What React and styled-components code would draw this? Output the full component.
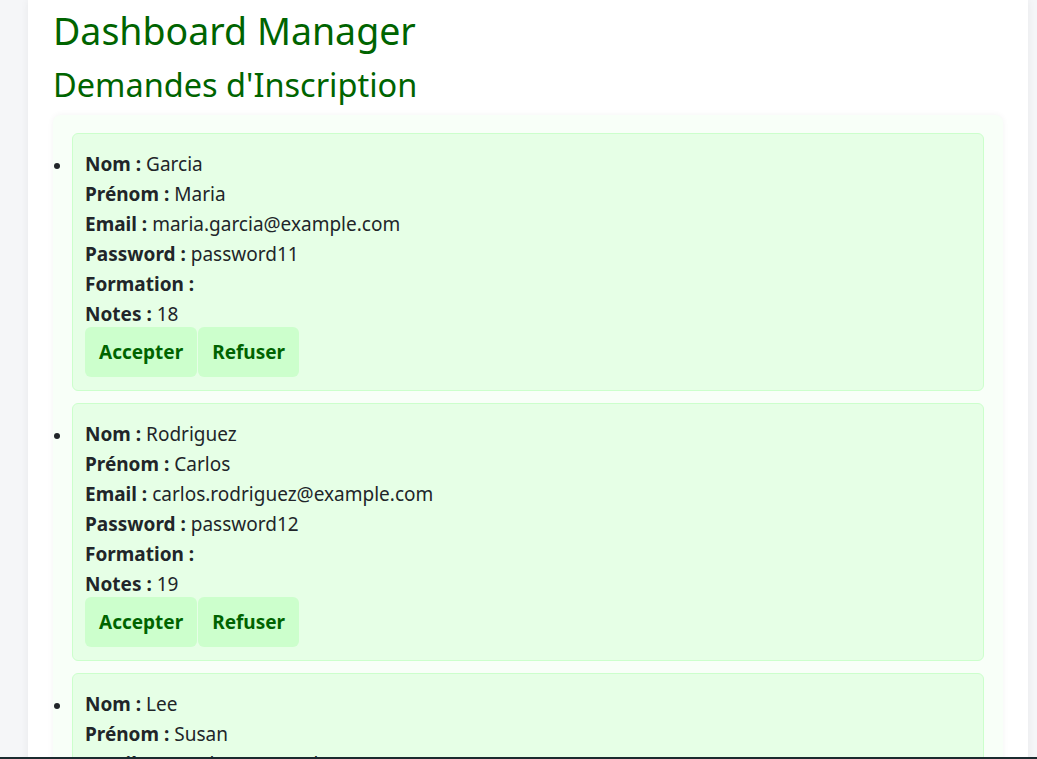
import React from 'react'
import { styled, createGlobalStyle } from 'styled-components';

const requests = [
  { nom: 'Garcia', prenom: 'Maria', email: 'maria.garcia@example.com', password: 'password11', formation: '', notes: 18 },
  { nom: 'Rodriguez', prenom: 'Carlos', email: 'carlos.rodriguez@example.com', password: 'password12', formation: '', notes: 19 },
  { nom: 'Lee', prenom: 'Susan', email: 'susan.lee@example.com', password: 'password13', formation: '', notes: 17 },
];

const GlobalStyle = createGlobalStyle`
  html, body {
    margin: 0;
    padding: 0;
    background: #f5f6f8;
    font-family: "Noto Sans", "Open Sans", sans-serif;
    color: #212529;
  }
`;

const App = () => {
  return (
    <>
      <GlobalStyle />
      <Page>
        <Title>Dashboard Manager</Title>
        <SubTitle>Demandes d'Inscription</SubTitle>
        <RequestList>
          {requests.map((r) => (
            <RequestItem key={r.email}>
              <Field><b>Nom :</b> {r.nom}</Field>
              <Field><b>Prénom :</b> {r.prenom}</Field>
              <Field><b>Email :</b> {r.email}</Field>
              <Field><b>Password :</b> {r.password}</Field>
              <Field><b>Formation :</b> {r.formation}</Field>
              <Field><b>Notes :</b> {r.notes}</Field>
              <Actions>
                <ActionButton>Accepter</ActionButton>
                <ActionButton>Refuser</ActionButton>
              </Actions>
            </RequestItem>
          ))}
        </RequestList>
      </Page>
      <BottomBar />
    </>
  );
};

export default App;

const Page = styled.div`
  width: 1000px;
  margin-left: 28px;
  min-height: 759px;
  box-sizing: border-box;
  background: #ffffff;
  padding: 8px 25px 0 25px;
  box-shadow: 0 0 8px rgba(0, 0, 0, 0.06);
`;

const Title = styled.h1`
  margin: 0 0 13px 0;
  font-size: 37.5px;
  font-weight: 400;
  line-height: 45px;
  color: #006400;
`;

const SubTitle = styled.h2`
  margin: 0 0 11px 0;
  font-size: 32.5px;
  font-weight: 400;
  line-height: 38px;
  color: #006400;
`;

const RequestList = styled.ul`
  margin: 0;
  padding: 18px 19px 0 19px;
  background: #f8fff8;
  border-radius: 8px;
  box-shadow: 0 0 6px rgba(0, 0, 0, 0.05);
`;

const RequestItem = styled.li`
  margin-bottom: 12px;
  padding: 15px 12px 13px 12px;
  background: #e6ffe6;
  border: 1px solid #ccffcc;
  border-radius: 6px;
`;

const Field = styled.div`
  font-size: 19px;
  line-height: 30px;

  b {
    font-weight: 700;
  }
`;

const Actions = styled.div`
  display: flex;
  gap: 1px;
  margin-top: -2px;
`;

const ActionButton = styled.button`
  height: 50px;
  padding: 0 14px;
  border: none;
  border-radius: 6px;
  background: #ccffcc;
  color: #006400;
  font-family: inherit;
  font-size: 19px;
  font-weight: 700;
  cursor: pointer;
`;

const BottomBar = styled.div`
  position: fixed;
  left: 0;
  right: 0;
  bottom: 0;
  height: 2px;
  background: #1b2b2f;
`;
